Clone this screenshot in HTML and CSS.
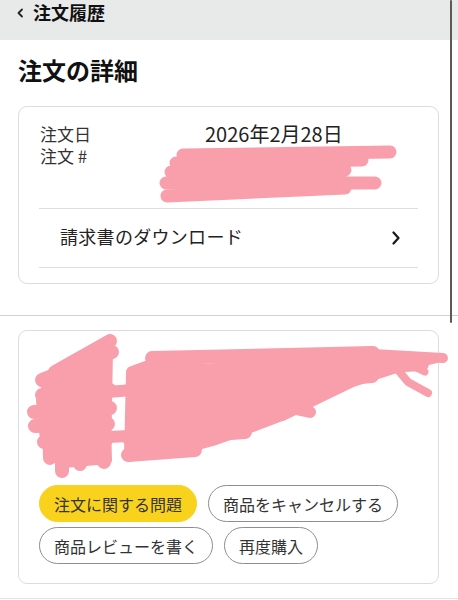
FILE: index.html
```html
<!DOCTYPE html>
<html lang="ja">
<head>
<meta charset="utf-8">
<link rel="stylesheet" href="styles.css">
</head>
<body>
<div class="page">
  <header class="topbar">
    <svg class="back" width="8" height="10" viewBox="0 0 8 10"><path d="M6 1.5 L2.5 5 L6 8.5" fill="none" stroke="#222" stroke-width="1.8" stroke-linecap="round" stroke-linejoin="round"/></svg>
    <span class="topbar-title">注文履歴</span>
  </header>

  <h1 class="title">注文の詳細</h1>

  <section class="card card-info">
    <div class="info">
      <div class="info-label">注文日</div>
      <div class="info-value date">2026年2月28日</div>
      <div class="info-label">注文 #</div>
      <div class="info-value">
        <svg class="redact redact-num" width="190" height="63" viewBox="0 0 190 63">
          <g transform="translate(-205,-145)" fill="none" stroke="#f99fac" stroke-width="13" stroke-linecap="round" stroke-linejoin="round">
            <path d="M183 155 L390 152"/>
            <path d="M176 163 L362 160"/>
            <path d="M171 172 L345 170"/>
            <path d="M166 183 L375 183"/>
            <path d="M167 196 L300 190 L345 188"/>
            <path d="M180 166 L340 176"/>
          </g>
        </svg>
      </div>
    </div>
    <div class="link-row">
      <span class="link-text">請求書のダウンロード</span>
      <svg class="chev" width="10" height="16" viewBox="0 0 10 16"><path d="M2.5 2.5 L7.5 8 L2.5 13.5" fill="none" stroke="#1a1a1a" stroke-width="2.3" stroke-linecap="round" stroke-linejoin="round"/></svg>
    </div>
  </section>

  <hr class="sep">

  <section class="card card-item">
    <svg class="redact redact-item" width="380" height="154" viewBox="0 0 380 154">
      <g transform="translate(-39,-331)" stroke="#f99fac" stroke-linecap="round" stroke-linejoin="round" fill="none">
        <path d="M60 378 L104 352 L108 460 L64 464 L44 440 L40 400 Z" fill="#f99fac" stroke-width="8"/>
        <path d="M110 341 L55 372" stroke-width="14"/>
        <path d="M112 352 L42 380" stroke-width="14"/>
        <path d="M42 395 L110 390" stroke-width="14"/>
        <path d="M34 412 L110 408" stroke-width="14"/>
        <path d="M35 426 L108 424" stroke-width="14"/>
        <path d="M44 442 L106 440" stroke-width="14"/>
        <path d="M62 372 L62 471" stroke-width="14"/>
        <path d="M84 362 L80 464" stroke-width="14"/>
        <path d="M106 350 L104 462" stroke-width="14"/>
        <path d="M48 385 L50 458" stroke-width="14"/>
        <path d="M108 392 L132 390" stroke-width="12"/>
        <path d="M108 437 L130 436" stroke-width="12"/>
        <path d="M136 372 L250 365 L373 356 L440 358 L400 368 L353 383 L287 415 L253 428 L213 442 L180 451 L133 454 Z" fill="#f99fac" stroke-width="8"/>
        <path d="M135 372 L165 361 L200 358" stroke-width="14"/>
        <path d="M152 358 L373 353" stroke-width="14"/>
        <path d="M373 354 L443 358" stroke-width="10"/>
        <path d="M140 380 L422 364" stroke-width="14"/>
        <path d="M135 395 L372 376" stroke-width="14"/>
        <path d="M133 410 L300 402" stroke-width="14"/>
        <path d="M134 425 L282 414" stroke-width="14"/>
        <path d="M130 440 L245 432" stroke-width="14"/>
        <path d="M128 455 L195 450" stroke-width="14"/>
        <path d="M132 372 L130 456" stroke-width="12"/>
        <path d="M200 418 L276 412 L305 403" stroke-width="12"/>
        <path d="M230 395 L310 412" stroke-width="12"/>
        <path d="M398 370 L408 382 L428 393" stroke-width="8"/>
        <path d="M412 366 L425 372" stroke-width="7"/>
      </g>
    </svg>
    <div class="actions">
      <button class="pill pill-primary">注文に関する問題</button>
      <button class="pill">商品をキャンセルする</button>
      <button class="pill">商品レビューを書く</button>
      <button class="pill">再度購入</button>
    </div>
  </section>

  <hr class="sep sep-bottom">

  <div class="scrollbar"></div>
</div>
</body>
</html>
```

FILE: styles.css
```css
* { box-sizing: border-box; }

html, body {
  margin: 0;
  padding: 0;
  background: #ffffff;
}

body {
  font-family: "Noto Sans CJK JP", "Noto Sans", sans-serif;
  color: #222;
  width: 458px;
  height: 600px;
  overflow: hidden;
}

.page {
  position: relative;
  width: 458px;
  height: 600px;
}

.topbar {
  height: 40px;
  background: #e8e9e9;
  display: flex;
  align-items: flex-start;
  padding-left: 16px;
  gap: 9px;
}

.back {
  margin-top: 8px;
  flex: none;
}

.topbar-title {
  font-size: 18px;
  font-weight: 700;
  line-height: 25px;
  color: #111;
}

.title {
  margin: 14px 0 20px 18px;
  font-size: 24px;
  line-height: 32px;
  font-weight: 700;
  color: #111;
}

.card {
  margin: 0 19px 0 18px;
  border: 1px solid #dcdcdc;
  border-radius: 9px;
  background: #fff;
}

.card-info {
  padding: 0 20px 15px 20px;
}

.info {
  display: grid;
  grid-template-columns: 166px 1fr;
  align-items: start;
  padding-top: 16px;
  font-size: 17px;
  line-height: 22px;
  color: #333;
}

.info-label {
  padding-left: 1px;
}

.date {
  font-size: 20px;
  color: #222;
}

.info-value {
  min-height: 22px;
}

.redact {
  display: block;
  overflow: visible;
}

.link-row {
  border-top: 1px solid #dedede;
  border-bottom: 1px solid #dedede;
  height: 60px;
  display: flex;
  align-items: center;
  justify-content: space-between;
  padding: 0 17px 0 21px;
  font-size: 18px;
  color: #222;
}

.link-text {
  letter-spacing: 0.3px;
  margin-top: -4px;
}

.chev {
  margin-top: -1px;
}

.sep {
  margin: 31px 0 14px 0;
  border: 0;
  border-top: 1px solid #d0d0d0;
  height: 0;
}

.card-item {
  padding: 0 20px 19px 20px;
}

.actions {
  display: flex;
  flex-wrap: wrap;
  gap: 5px 11px;
}

.pill {
  font-family: "Noto Sans CJK JP", "Noto Sans", sans-serif;
  font-size: 16px;
  color: #333;
  height: 37px;
  padding: 0 14px;
  border-radius: 19px;
  border: 1px solid #8e8e8e;
  background: #fff;
  line-height: 1;
  margin: 0;
}

.pill-primary {
  background: #f9d21e;
  border-color: #f9d21e;
}

.sep-bottom {
  margin: 14px 0 0 0;
  border-top-color: #e2e2e2;
}

.scrollbar {
  position: absolute;
  left: 450px;
  top: 0;
  width: 2px;
  height: 323px;
  background: #5a5a5a;
  border-radius: 1px;
}
```
